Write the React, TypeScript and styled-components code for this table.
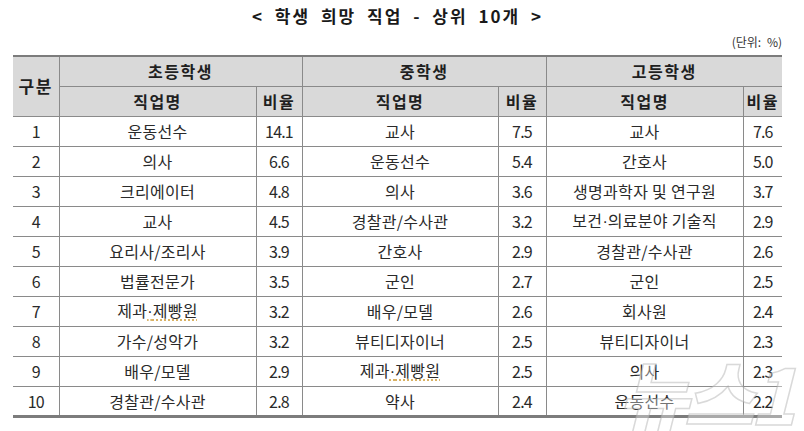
import React from "react";
import styled, { createGlobalStyle } from "styled-components";

const Global = createGlobalStyle`
  html, body { margin: 0; padding: 0; background: #ffffff; }
  body { font-family: "Noto Sans CJK KR", "Noto Sans", sans-serif; color: #222; }
`;

const Page = styled.div`
  position: relative;
  width: 804px;
  height: 431px;
  overflow: hidden;
  padding: 0 22px 0 13px;
  box-sizing: border-box;
`;

const Title = styled.h1`
  margin: 0;
  padding-top: 5px;
  height: 33px;
  box-sizing: border-box;
  text-align: center;
  font-size: 17px;
  line-height: 22px;
  font-weight: 700;
  letter-spacing: 2px;
  word-spacing: 5px;
  color: #1a1a1a;
`;

const Unit = styled.div`
  text-align: right;
  font-size: 12px;
  line-height: 16px;
  height: 22px;
  padding-top: 1px;
  box-sizing: border-box;
  color: #333;
  word-spacing: 3px;
`;

const Table = styled.table`
  width: 769px;
  border-collapse: collapse;
  table-layout: fixed;
  border-top: 2px solid #7c7c7c;
  border-bottom: 3px solid #7c7c7c;
`;

const Th = styled.th<{ $big?: boolean }>`
  background: #d9d9d9;
  height: 30px;
  padding: 0;
  box-sizing: border-box;
  font-size: ${(p) => (p.$big ? "17px" : "16px")};
  font-weight: 700;
  letter-spacing: 1.5px;
  color: #1f1f1f;
  line-height: 20px;
  border: 1px solid #8a8a8a;
  &:first-child { border-left: none; }
  &:last-child { border-right: none; }
`;

const Td = styled.td<{ $num?: boolean }>`
  height: 30px;
  padding: 0;
  box-sizing: border-box;
  text-align: center;
  font-size: 16px;
  line-height: 20px;
  font-weight: 400;
  color: #2a2a2a;
  letter-spacing: ${(p) => (p.$num ? "-0.8px" : "0.3px")};
  border: 1px solid #8a8a8a;
  &:first-child { border-left: none; }
  &:last-child { border-right: none; }
`;

const Dot = styled.span`
  font-family: "Liberation Sans", sans-serif;
  letter-spacing: 0;
`;

const Spell = styled.span`
  text-decoration: underline dotted #d0a040;
  text-underline-offset: 3px;
`;

const Watermark = styled.div`
  position: absolute;
  right: 12px;
  bottom: -16px;
  font-size: 76px;
  font-weight: 900;
  font-style: italic;
  letter-spacing: -4px;
  color: rgba(255, 255, 255, 0.35);
  -webkit-text-stroke: 1.5px rgba(170, 170, 170, 0.45);
  pointer-events: none;
  font-family: "Noto Sans CJK KR", sans-serif;
`;

type Row = [string, React.ReactNode, string, React.ReactNode, string, React.ReactNode, string];

const Bakery = () => (
  <>
    제과<Spell><Dot>·</Dot>제빵원</Spell>
  </>
);

const rows: Row[] = [
  ["1", "운동선수", "14.1", "교사", "7.5", "교사", "7.6"],
  ["2", "의사", "6.6", "운동선수", "5.4", "간호사", "5.0"],
  ["3", "크리에이터", "4.8", "의사", "3.6", "생명과학자 및 연구원", "3.7"],
  ["4", "교사", "4.5", "경찰관/수사관", "3.2", <>보건<Dot>·</Dot>의료분야 기술직</>, "2.9"],
  ["5", "요리사/조리사", "3.9", "간호사", "2.9", "경찰관/수사관", "2.6"],
  ["6", "법률전문가", "3.5", "군인", "2.7", "군인", "2.5"],
  ["7", <Bakery />, "3.2", "배우/모델", "2.6", "회사원", "2.4"],
  ["8", "가수/성악가", "3.2", "뷰티디자이너", "2.5", "뷰티디자이너", "2.3"],
  ["9", "배우/모델", "2.9", <Bakery />, "2.5", "의사", "2.3"],
  ["10", "경찰관/수사관", "2.8", "약사", "2.4", "운동선수", "2.2"],
];

const widths = [46, 197, 46, 196, 48, 197, 39];

export default function App() {
  return (
    <Page>
      <Global />
      <Title>&lt; 학생 희망 직업 - 상위 10개 &gt;</Title>
      <Unit>(단위: %)</Unit>
      <Table>
        <colgroup>
          {widths.map((w, i) => (
            <col key={i} style={{ width: w }} />
          ))}
        </colgroup>
        <thead>
          <tr>
            <Th $big rowSpan={2}>구분</Th>
            <Th colSpan={2}>초등학생</Th>
            <Th colSpan={2}>중학생</Th>
            <Th colSpan={2}>고등학생</Th>
          </tr>
          <tr>
            <Th>직업명</Th>
            <Th>비율</Th>
            <Th>직업명</Th>
            <Th>비율</Th>
            <Th>직업명</Th>
            <Th>비율</Th>
          </tr>
        </thead>
        <tbody>
          {rows.map((r, i) => (
            <tr key={i}>
              <Td $num>{r[0]}</Td>
              <Td>{r[1]}</Td>
              <Td $num>{r[2]}</Td>
              <Td>{r[3]}</Td>
              <Td $num>{r[4]}</Td>
              <Td>{r[5]}</Td>
              <Td $num>{r[6]}</Td>
            </tr>
          ))}
        </tbody>
      </Table>
      <Watermark aria-hidden="true">뉴스1</Watermark>
    </Page>
  );
}
